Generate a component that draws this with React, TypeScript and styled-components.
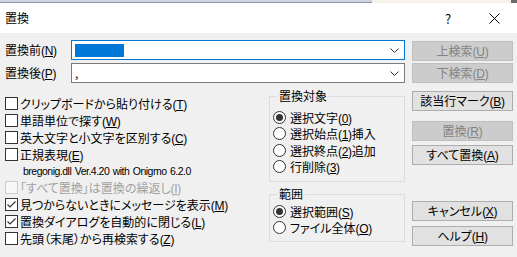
import React from 'react'
import styled, { createGlobalStyle } from 'styled-components'

const Global = createGlobalStyle`
  html, body {
    margin: 0;
    padding: 0;
    background: #f0f0f0;
  }

  body {
    font-family: "Noto Sans CJK JP", "Noto Sans", sans-serif;
    font-size: 12px;
    color: #000;
    font-feature-settings: "palt";
  }
`

const Screen = styled.div`
  width: 517px;
  height: 257px;
  overflow: hidden;
  display: flex;
  flex-direction: column;
  background: #f0f0f0;
`

// strip of the window behind the dialog
const BackStrip = styled.div`
  height: 3px;
  display: flex;
  flex-shrink: 0;
`

const StripLeft = styled.div`
  width: 372px;
  box-sizing: border-box;
  background: #cdd4e0;
  border-bottom: 1px solid #8e98aa;
`

const StripRight = styled.div`
  flex: 1;
  background: #f6f2e8;
  border-right: 6px solid #6b6b6b;
`

const TitleBar = styled.div`
  height: 30px;
  flex-shrink: 0;
  display: flex;
  align-items: center;
  background: #fff;
  padding-left: 5px;
`

const Title = styled.span`
  flex: 1;
  line-height: 16px;
`

const CaptionButton = styled.div`
  width: 46px;
  height: 30px;
  display: flex;
  align-items: center;
  justify-content: center;
  font-size: 13px;
`

const Body = styled.div`
  flex: 1;
  padding: 7px 4px 0 5px;
  display: flex;
  flex-direction: column;
`

const InputRows = styled.div`
  display: flex;
  flex-direction: column;
  gap: 3px;
`

const InputRow = styled.div`
  display: flex;
  align-items: flex-start;
  height: 20px;
`

const FieldLabel = styled.span`
  width: 66px;
  line-height: 20px;
`

const Combo = styled.div<{ $focused?: boolean }>`
  width: 334px;
  height: 20px;
  box-sizing: border-box;
  border: 1px solid ${p => (p.$focused ? '#0078d7' : '#7a7a7a')};
  background: #fff;
  display: flex;
  align-items: center;
  padding: 0 5px 0 3px;
`

const ComboValue = styled.span`
  flex: 1;
  display: flex;
  align-items: center;
  line-height: 16px;
`

const Selection = styled.span`
  display: inline-block;
  width: 49px;
  height: 13px;
  background: #0078d7;
`

const Chevron = () => (
  <svg width="9" height="5" viewBox="0 0 9 5">
    <path d="M0.5 0.5 L4.5 4.5 L8.5 0.5" fill="none" stroke="#333" strokeWidth="1" />
  </svg>
)

const SideButton = styled.button<{ $mt?: number }>`
  width: 101px;
  height: 20px;
  margin: ${p => p.$mt || 0}px 0 0 0;
  padding: 0;
  box-sizing: border-box;
  border: 1px solid ${p => (p.disabled ? '#bfbfbf' : '#adadad')};
  background: ${p => (p.disabled ? '#cccccc' : '#e1e1e1')};
  color: ${p => (p.disabled ? '#838383' : '#000')};
  font-family: inherit;
  font-size: 12px;
  font-feature-settings: "palt";
  line-height: 18px;
  text-align: center;
`

const TopButton = styled(SideButton)`
  margin-left: 7px;
`

const Lower = styled.div`
  display: flex;
  align-items: flex-start;
  margin-top: 5px;
`

const LeftCol = styled.div`
  width: 264px;
  padding-top: 7px;
  display: flex;
  flex-direction: column;
`

const CheckRow = styled.label<{ $disabled?: boolean }>`
  height: 17px;
  display: flex;
  align-items: center;
  gap: 2px;
  white-space: nowrap;
  color: ${p => (p.$disabled ? '#a0a0a0' : '#000')};
`

const Box = styled.span<{ $disabled?: boolean }>`
  width: 13px;
  height: 13px;
  box-sizing: border-box;
  border: 1px solid ${p => (p.$disabled ? '#cccccc' : '#333')};
  background: ${p => (p.$disabled ? '#f7f7f7' : '#fff')};
  display: flex;
  align-items: center;
  justify-content: center;
  flex-shrink: 0;
`

const Note = styled.div`
  height: 16px;
  line-height: 16px;
  padding-left: 18px;
  white-space: nowrap;
  font-family: "Liberation Sans", sans-serif;
  font-size: 10.5px;
  letter-spacing: -0.5px;
  word-spacing: 1px;
`

const MidCol = styled.div`
  width: 136px;
  display: flex;
  flex-direction: column;
`

const Group = styled.fieldset<{ $pt: number; $pb: number; $mt?: number }>`
  margin: ${p => p.$mt || 0}px 0 0 0;
  padding: ${p => p.$pt}px 0 ${p => p.$pb}px 3px;
  border: 1px solid #dcdcdc;
  min-width: 0;
  box-sizing: border-box;
`

const GroupTitle = styled.legend`
  padding: 0 2px;
  margin-left: 4px;
  line-height: 16px;
`

const RadioRow = styled.label`
  height: 16.5px;
  display: flex;
  align-items: center;
  gap: 4px;
  white-space: nowrap;
`

const RadioDot = styled.span<{ $checked?: boolean }>`
  width: 13px;
  height: 13px;
  box-sizing: border-box;
  border-radius: 50%;
  border: 1px solid #333;
  background: #fff;
  display: flex;
  align-items: center;
  justify-content: center;
  flex-shrink: 0;

  &::after {
    content: '';
    width: 7px;
    height: 7px;
    border-radius: 50%;
    background: ${p => (p.$checked ? '#333' : 'transparent')};
  }
`

const RightCol = styled.div`
  margin-left: 7px;
  display: flex;
  flex-direction: column;
`

// access key suffix like (N), narrower latin than the CJK font
const KeyText = styled.span`
  font-family: "Liberation Sans", "Noto Sans", sans-serif;
  font-size: 12px;
  letter-spacing: -0.3px;
`

const Tick = () => (
  <svg width="11" height="11" viewBox="0 0 11 11">
    <path d="M1.5 5.5 L4 8 L9.5 2.5" fill="none" stroke="#333" strokeWidth="1.2" />
  </svg>
)

const Check = ({ label, checked, disabled }: { label: React.ReactNode; checked?: boolean; disabled?: boolean }) => (
  <CheckRow $disabled={disabled}>
    <Box $disabled={disabled}>{checked && <Tick />}</Box>
    <span>{label}</span>
  </CheckRow>
)

const Radio = ({ label, checked }: { label: React.ReactNode; checked?: boolean }) => (
  <RadioRow>
    <RadioDot $checked={checked} />
    <span>{label}</span>
  </RadioRow>
)

const Key = ({ k }: { k: string }) => (
  <KeyText>
    (<u>{k}</u>)
  </KeyText>
)

export default function App() {
  return (
    <>
      <Global />
      <Screen>
        <BackStrip>
          <StripLeft />
          <StripRight />
        </BackStrip>

        <TitleBar>
          <Title>置換</Title>
          <CaptionButton>?</CaptionButton>
          <CaptionButton>
            <svg width="11" height="11" viewBox="0 0 11 11">
              <path d="M0.5 0.5 L10.5 10.5 M10.5 0.5 L0.5 10.5" stroke="#000" strokeWidth="1" />
            </svg>
          </CaptionButton>
        </TitleBar>

        <Body>
          <InputRows>
            <InputRow>
              <FieldLabel>置換前<Key k="N" /></FieldLabel>
              <Combo $focused>
                <ComboValue><Selection /></ComboValue>
                <Chevron />
              </Combo>
              <TopButton disabled $mt={1}>上検索<Key k="U" /></TopButton>
            </InputRow>
            <InputRow>
              <FieldLabel>置換後<Key k="P" /></FieldLabel>
              <Combo>
                <ComboValue>,</ComboValue>
                <Chevron />
              </Combo>
              <TopButton disabled>下検索<Key k="D" /></TopButton>
            </InputRow>
          </InputRows>

          <Lower>
            <LeftCol>
              <Check label={<>クリップボードから貼り付ける<Key k="T" /></>} />
              <Check label={<>単語単位で探す<Key k="W" /></>} />
              <Check label={<>英大文字と小文字を区別する<Key k="C" /></>} />
              <Check label={<>正規表現<Key k="E" /></>} />
              <Note>bregonig.dll Ver.4.20 with Onigmo 6.2.0</Note>
              <Check disabled label={<>「すべて置換」は置換の繰返し<Key k="I" /></>} />
              <Check checked label={<>見つからないときにメッセージを表示<Key k="M" /></>} />
              <Check checked label={<>置換ダイアログを自動的に閉じる<Key k="L" /></>} />
              <Check label={<>先頭（末尾）から再検索する<Key k="Z" /></>} />
            </LeftCol>

            <MidCol>
              <Group $pt={5} $pb={6}>
                <GroupTitle>置換対象</GroupTitle>
                <Radio checked label={<>選択文字<Key k="0" /></>} />
                <Radio label={<>選択始点<Key k="1" />挿入</>} />
                <Radio label={<>選択終点<Key k="2" />追加</>} />
                <Radio label={<>行削除<Key k="3" /></>} />
              </Group>
              <Group $mt={4} $pt={1} $pb={5}>
                <GroupTitle>範囲</GroupTitle>
                <Radio checked label={<>選択範囲<Key k="S" /></>} />
                <Radio label={<>ファイル全体<Key k="O" /></>} />
              </Group>
            </MidCol>

            <RightCol>
              <SideButton $mt={3}>該当行マーク<Key k="B" /></SideButton>
              <SideButton disabled $mt={10}>置換<Key k="R" /></SideButton>
              <SideButton $mt={4}>すべて置換<Key k="A" /></SideButton>
              <SideButton $mt={36}>キャンセル<Key k="X" /></SideButton>
              <SideButton $mt={5}>ヘルプ<Key k="H" /></SideButton>
            </RightCol>
          </Lower>
        </Body>
      </Screen>
    </>
  )
}
